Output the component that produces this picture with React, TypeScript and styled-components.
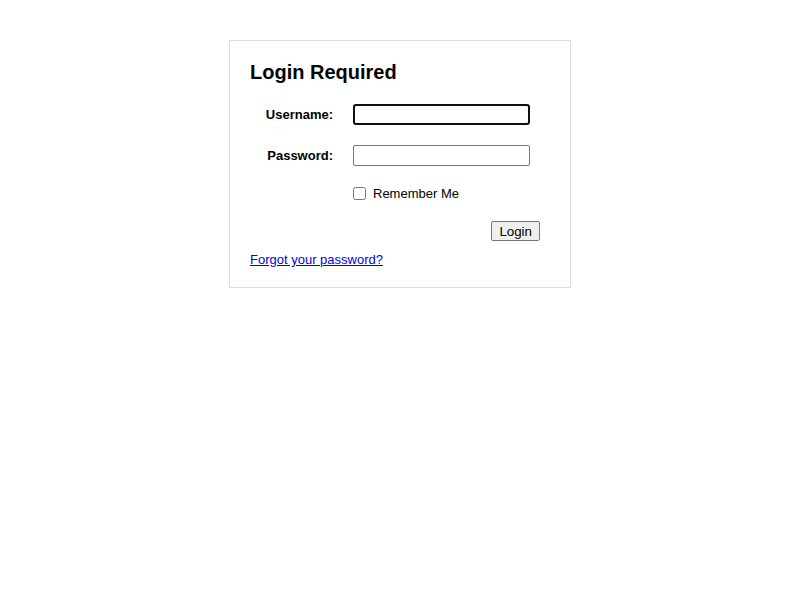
import React from 'react';
import styled, { createGlobalStyle } from 'styled-components';

const GlobalStyle = createGlobalStyle`
    html, body {
        margin: 0;
        padding: 0;
        background: #ffffff;
    }
    body {
        font-family: "Liberation Sans", Arial, sans-serif;
        color: #000000;
    }
`;

const Page = styled.div`
    display: flex;
    justify-content: center;
    padding-top: 40px;
`;

const Panel = styled.div`
    width: 342px;
    box-sizing: border-box;
    border: 1px solid #dddddd;
    padding: 20px;
    display: flex;
    flex-direction: column;
`;

const Title = styled.h2`
    margin: 0 0 20px;
    font-size: 20px;
    font-weight: bold;
    line-height: 23px;
`;

const Form = styled.form`
    display: grid;
    grid-template-columns: 83px 177px;
    column-gap: 20px;
    row-gap: 20px;
    align-items: center;
`;

const Label = styled.label`
    font-size: 13px;
    font-weight: bold;
    line-height: 15px;
    text-align: right;
`;

const TextInput = styled.input<{ focused?: boolean }>`
    width: 177px;
    height: 21px;
    box-sizing: border-box;
    margin: 0;
    padding: 1px 2px;
    font-family: "Liberation Sans", Arial, sans-serif;
    font-size: 13px;
    border: ${props => (props.focused ? '2px solid #101010' : '1px solid #767676')};
    border-radius: ${props => (props.focused ? '3px' : '2px')};
    outline: none;
    background: #ffffff;
`;

const CheckRow = styled.label`
    grid-column: 2;
    display: flex;
    align-items: center;
    gap: 7px;
    font-size: 13px;
    line-height: 15px;
`;

const Checkbox = styled.input`
    width: 13px;
    height: 13px;
    margin: 0;
`;

const ButtonRow = styled.div`
    grid-column: 1 / span 2;
    display: flex;
    justify-content: flex-end;
    margin-right: -10px;
`;

const Button = styled.button`
    height: 20px;
    box-sizing: border-box;
    padding: 1px 7px;
    font-family: "Liberation Sans", Arial, sans-serif;
    font-size: 13.333px;
    color: #000000;
    background: #efefef;
    border: 1px solid #767676;
    border-radius: 2px;
`;

const ForgotLink = styled.a`
    margin-top: 11px;
    font-size: 13px;
    line-height: 15px;
    color: #0000ee;
    text-decoration: underline;
    align-self: flex-start;
`;

export default function App() {
    return (
        <>
            <GlobalStyle />
            <Page>
                <Panel>
                    <Title>Login Required</Title>
                    <Form onSubmit={e => e.preventDefault()}>
                        <Label htmlFor="username">Username:</Label>
                        <TextInput id="username" type="text" focused />
                        <Label htmlFor="password">Password:</Label>
                        <TextInput id="password" type="password" />
                        <CheckRow>
                            <Checkbox type="checkbox" />
                            Remember Me
                        </CheckRow>
                        <ButtonRow>
                            <Button type="submit">Login</Button>
                        </ButtonRow>
                    </Form>
                    <ForgotLink href="#">Forgot your password?</ForgotLink>
                </Panel>
            </Page>
        </>
    );
}
